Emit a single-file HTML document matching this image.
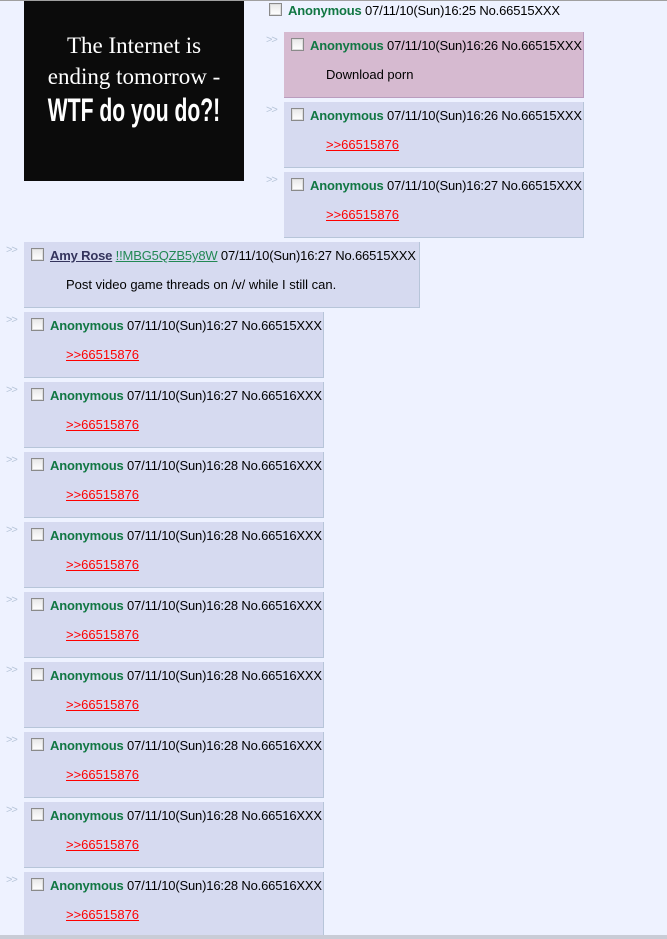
<!DOCTYPE html>
<html><head><meta charset="utf-8"><style>
body{margin:0;width:667px;height:939px;background:#eef2ff;font-family:"Liberation Sans",Arial,sans-serif;font-size:13px;color:#000;position:relative;overflow:hidden}
.top{position:absolute;left:0;top:0;width:667px;height:1px;background:#a0a0a0}
.img{position:absolute;left:24px;top:1px;width:220px;height:180px;background:#0b0b0b;color:#fff;text-align:center;font-family:"Liberation Serif",serif;overflow:hidden}
.r{position:absolute;background:#d6daf0;border-right:1px solid #b7c5d9;border-bottom:1px solid #b7c5d9;box-sizing:border-box;height:66px}
.r.h{background:#d6bad0;border-color:#ba9dbf}
.ar{position:absolute;color:#b7c5d9;font-size:11px;letter-spacing:-1px}
.cb{position:absolute;width:11px;height:11px;border:1px solid #8a8a8a;background:linear-gradient(#e8e8e8,#fff);box-shadow:inset 0 0 0 1px #ddd}
.hd{position:absolute;white-space:nowrap;line-height:15px;letter-spacing:-0.17px}
.n{color:#117743;font-weight:bold}
.bd{position:absolute;white-space:nowrap;line-height:15px}
a{color:#f00;text-decoration:underline}
.amy{color:#34345c;font-weight:bold;text-decoration:underline}
.trip{color:#228854;text-decoration:underline}
.bot{position:absolute;left:0;top:935px;width:667px;height:4px;background:#c9ccd6}
</style></head><body>
<div class="top"></div>
<div class="img">
<div style="position:absolute;top:29px;width:100%;font-size:23px;line-height:31px;white-space:nowrap">The Internet is<br>ending tomorrow -</div>
<div style="position:absolute;top:91px;left:-40px;width:300px;white-space:nowrap;font-family:'Liberation Sans',sans-serif;font-weight:bold;font-size:32px;transform:scaleX(0.66);letter-spacing:0px">WTF do you do?!</div>
</div>
<div class="cb" style="left:269px;top:3px"></div>
<div class="hd" style="left:288px;top:3px"><span class="n">Anonymous</span> 07/11/10(Sun)16:25 No.66515XXX</div>

<div id="c"></div>
<script>
var items=[
[284,32,300,'h','<span class="n">Anonymous</span> 07/11/10(Sun)16:26 No.66515XXX','Download porn'],
[284,102,300,'','<span class="n">Anonymous</span> 07/11/10(Sun)16:26 No.66515XXX','L'],
[284,172,300,'','<span class="n">Anonymous</span> 07/11/10(Sun)16:27 No.66515XXX','L'],
[24,242,396,'','<span class="amy">Amy Rose</span> <span class="trip">!!MBG5QZB5y8W</span> 07/11/10(Sun)16:27 No.66515XXX','Post video game threads on /v/ while I still can.'],
[24,312,300,'','<span class="n">Anonymous</span> 07/11/10(Sun)16:27 No.66515XXX','L'],
[24,382,300,'','<span class="n">Anonymous</span> 07/11/10(Sun)16:27 No.66516XXX','L']];
for(var i=0;i<7;i++)items.push([24,452+70*i,300,'','<span class="n">Anonymous</span> 07/11/10(Sun)16:28 No.66516XXX','L']);
var h='';
items.forEach(function(t){
var x=t[0],y=t[1];
h+='<div class="ar" style="left:'+(x-18)+'px;top:'+(y+2)+'px">&gt;&gt;</div>';
h+='<div class="r '+t[3]+'" style="left:'+x+'px;top:'+y+'px;width:'+t[2]+'px"></div>';
h+='<div class="cb" style="left:'+(x+7)+'px;top:'+(y+6)+'px"></div>';
h+='<div class="hd" style="left:'+(x+26)+'px;top:'+(y+6)+'px">'+t[4]+'</div>';
var b=t[5]=='L'?'<a>&gt;&gt;66515876</a>':t[5];
h+='<div class="bd" style="left:'+(x+42)+'px;top:'+(y+35)+'px">'+b+'</div>';
});
document.getElementById('c').innerHTML=h;
</script>
<div class="bot"></div>
</body></html>
